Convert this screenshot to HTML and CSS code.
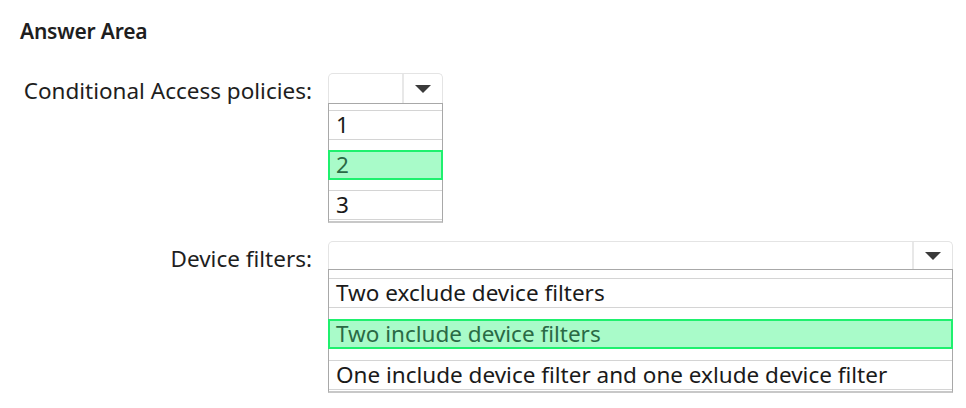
FILE: index.html
```html
<!DOCTYPE html>
<html lang="en">
<head>
    <meta charset="UTF-8">
    <title>Answer Area</title>
    <link rel="stylesheet" href="styles.css">
</head>
<body>
    <div class="answer-area">
        <h2 class="title">Answer Area</h2>

        <div class="question">
            <div class="label">Conditional Access policies:</div>
            <div class="dropdown small">
                <div class="select">
                    <span class="value"></span>
                    <span class="arrow"><i></i></span>
                </div>
                <div class="options">
                    <div class="option">1</div>
                    <div class="option selected">2</div>
                    <div class="option">3</div>
                </div>
            </div>
        </div>

        <div class="question">
            <div class="label">Device filters:</div>
            <div class="dropdown wide">
                <div class="select">
                    <span class="value"></span>
                    <span class="arrow"><i></i></span>
                </div>
                <div class="options">
                    <div class="option">Two exclude device filters</div>
                    <div class="option selected">Two include device filters</div>
                    <div class="option">One include device filter and one exlude device filter</div>
                </div>
            </div>
        </div>
    </div>
</body>
</html>
```

FILE: styles.css
```css
body {
    margin: 0;
    background: #fff;
    font-family: 'Noto Sans', 'Open Sans', sans-serif;
    color: #1e1e1e;
}

.answer-area {
    padding: 17px 0 0 20px;
}

.title {
    margin: 0 0 27px 0;
    font-size: 21px;
    font-weight: 600;
    line-height: 29px;
    letter-spacing: -0.2px;
}

.question {
    display: grid;
    grid-template-columns: 292px auto;
    column-gap: 16px;
    align-items: start;
    margin-bottom: 18px;
}

.label {
    text-align: right;
    font-size: 22.5px;
    line-height: 30px;
    padding-top: 3px;
}

.dropdown.small { width: 115px; }
.dropdown.wide { width: 625px; }

.select {
    display: flex;
    height: 29px;
    border: 1px solid #e4e4e4;
    border-bottom: none;
    border-radius: 5px 5px 0 0;
}

.wide .select { height: 27px; }

.value { flex: 1; }

.arrow {
    width: 38px;
    border-left: 2px solid #e8e8e8;
    display: flex;
    align-items: center;
    justify-content: center;
}

.arrow i {
    width: 0;
    height: 0;
    border-left: 8px solid transparent;
    border-right: 8px solid transparent;
    border-top: 8px solid #3a3a3a;
}

.options {
    border: 1px solid #a8a8a8;
    border-bottom: 2px solid #c8c8c8;
    padding: 6px 0 1px 0;
    display: flex;
    flex-direction: column;
    gap: 10px;
}

.wide .options {
    padding-top: 8px;
    gap: 11px;
}

.option {
    height: 28px;
    line-height: 28px;
    border-top: 1px solid #d4d4d4;
    border-bottom: 1px solid #d4d4d4;
    padding-left: 7px;
    font-size: 22.5px;
    color: #1a1a1a;
}

.option.selected {
    background: #a9fbc9;
    border: 2px solid #1ff06e;
    height: 26px;
    line-height: 26px;
    padding-left: 6px;
    margin: 0 -1px;
    color: #2a6a45;
}
```
